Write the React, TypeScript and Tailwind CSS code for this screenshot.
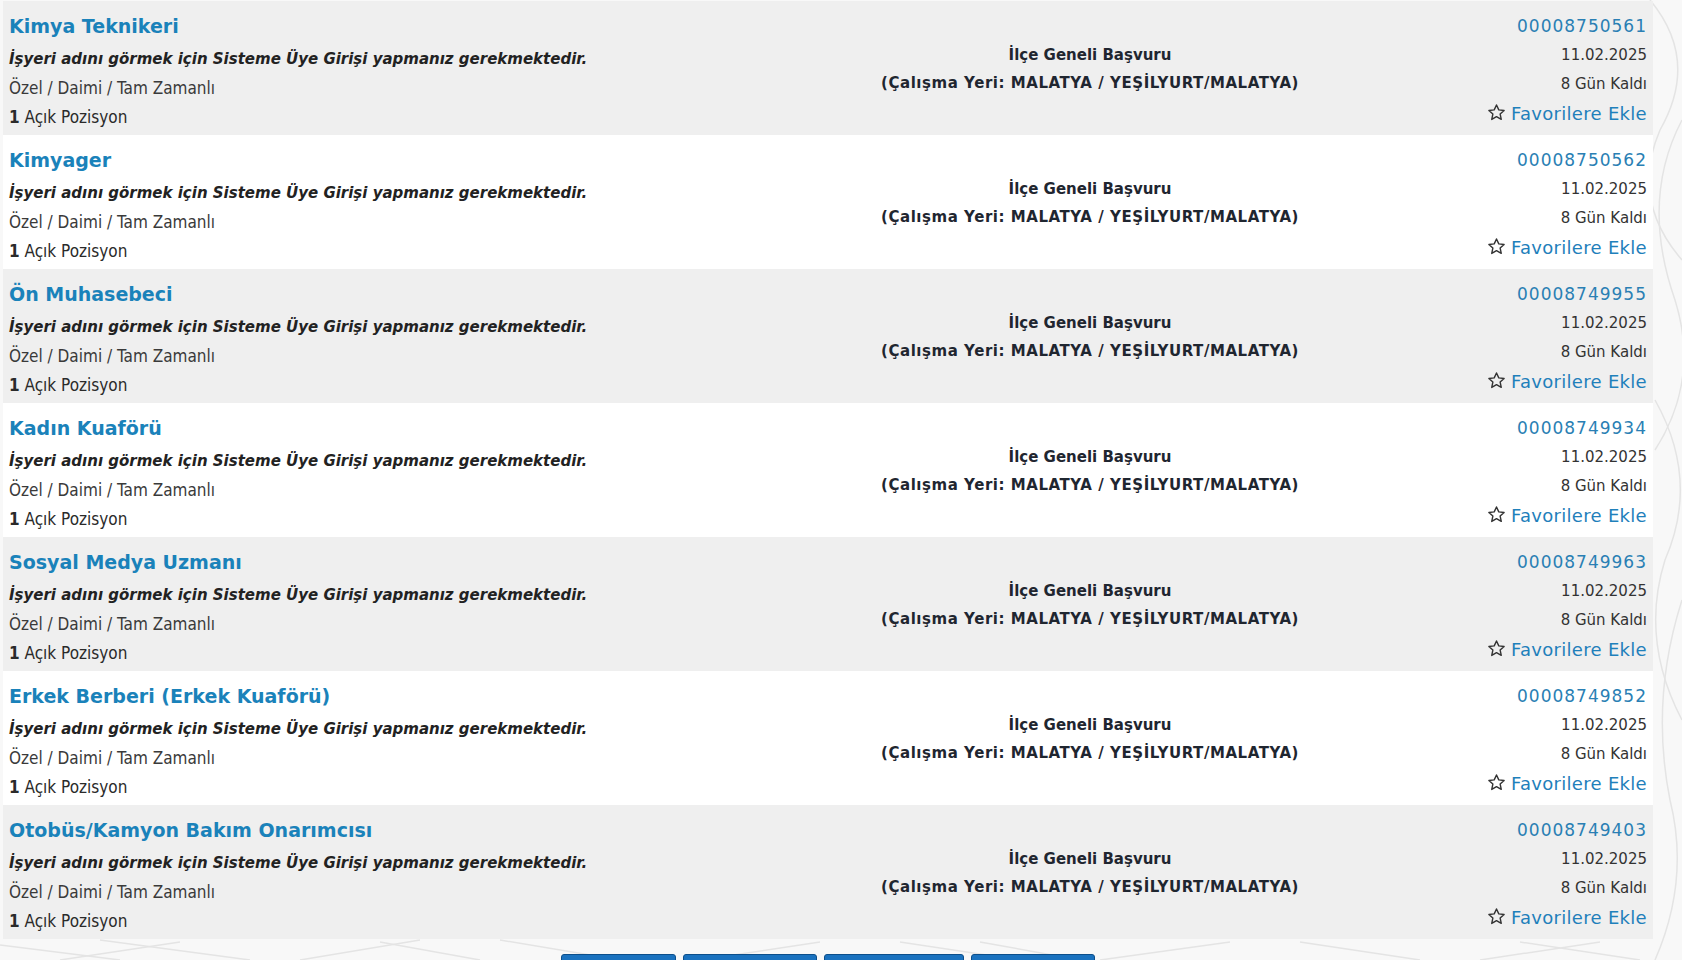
import React from "react";

type Job = { title: string; no: string };

const jobs: Job[] = [
  { title: "Kimya Teknikeri", no: "00008750561" },
  { title: "Kimyager", no: "00008750562" },
  { title: "Ön Muhasebeci", no: "00008749955" },
  { title: "Kadın Kuaförü", no: "00008749934" },
  { title: "Sosyal Medya Uzmanı", no: "00008749963" },
  { title: "Erkek Berberi (Erkek Kuaförü)", no: "00008749852" },
  { title: "Otobüs/Kamyon Bakım Onarımcısı", no: "00008749403" },
];

const StarIcon = () => (
  <svg width="19" height="19" viewBox="0 0 24 24" className="inline-block align-[-2px] mr-[5px]">
    <polygon
      points="12,2.5 14.9,8.7 21.6,9.4 16.6,14 18,20.7 12,17.3 6,20.7 7.4,14 2.4,9.4 9.1,8.7"
      fill="none"
      stroke="#333"
      strokeWidth="1.8"
      strokeLinejoin="round"
    />
  </svg>
);

const Pattern = () => (
  <svg className="absolute inset-0 w-full h-full" viewBox="0 0 1682 960" preserveAspectRatio="none">
    <g stroke="#e4e4e4" strokeWidth="1.5" fill="none">
      <path d="M1650 0 Q1700 60 1660 130 Q1630 200 1682 260" />
      <path d="M1682 120 Q1640 200 1675 300 Q1700 380 1655 450" />
      <path d="M1655 400 Q1700 480 1665 560 Q1640 640 1682 720" />
      <path d="M1682 600 Q1650 700 1670 800 Q1690 880 1655 960" />
      <path d="M0 945 L120 960 M100 940 L250 960 M300 960 L420 940 M500 940 L620 960 M700 960 L820 942 M900 942 L1020 960 M1100 960 L1230 942 M1300 942 L1420 960 M1480 960 L1600 942" />
      <path d="M60 960 L180 942 M380 942 L480 960 M980 942 L1080 960 M1520 942 L1640 960" />
    </g>
  </svg>
);

const tahoma = { fontFamily: "'DejaVu Sans Condensed', Tahoma, 'Liberation Sans', sans-serif" };

export default function App() {
  return (
    <div
      className="relative w-[1682px] h-[960px] overflow-hidden bg-[#f8f8f8]"
      style={{ fontFamily: "'DejaVu Sans', Verdana, sans-serif" }}
    >
      <Pattern />
      <div className="relative flex flex-col">
        <div className="pt-[1px] pl-[3px] w-[1653px]">
          {jobs.map((j, i) => (
            <div
              key={j.no}
              className={`grid grid-cols-[787px_600px_1fr] h-[134px] ${i % 2 === 0 ? "bg-[#efefef]" : "bg-white"}`}
            >
              <div className="pl-[6px] pt-[9px]">
                <div className="text-[19px] font-bold leading-[33px] text-[#1a82ba]">{j.title}</div>
                <div className="mt-[2px] text-[15px] font-bold italic leading-[29px] text-[#222]">
                  İşyeri adını görmek için Sisteme Üye Girişi yapmanız gerekmektedir.
                </div>
                <div className="text-[17px] leading-[29px] text-[#3a3a3a]" style={tahoma}>
                  Özel / Daimi / Tam Zamanlı
                </div>
                <div className="text-[17px] leading-[29px] text-[#2a2a2a]" style={tahoma}>
                  <b>1</b> Açık Pozisyon
                </div>
              </div>
              <div className="pt-[40px] text-center text-[15px] font-bold leading-[28px] text-[#1f2630]">
                <div>İlçe Geneli Başvuru</div>
                <div className="tracking-[0.55px]">(Çalışma Yeri: MALATYA / YEŞİLYURT/MALATYA)</div>
              </div>
              <div className="pr-[6px] pt-[11px] text-right text-[15px] leading-[29px]">
                <div className="text-[17px] text-[#2a7fb4] tracking-[1px]">{j.no}</div>
                <div className="text-[#333]">11.02.2025</div>
                <div className="text-[#333]">8 Gün Kaldı</div>
                <div className="text-[18px] text-[#1f80bb] tracking-[0.3px]">
                  <StarIcon />
                  Favorilere Ekle
                </div>
              </div>
            </div>
          ))}
        </div>
        <div className="mt-[15px] flex justify-center gap-[7px] pr-[27px]">
          <div className="w-[115px] h-[20px] rounded-t-[3px] bg-[#1a72bf] border border-[#0d4f8a]" />
          <div className="w-[134px] h-[20px] rounded-t-[3px] bg-[#1a72bf] border border-[#0d4f8a]" />
          <div className="w-[140px] h-[20px] rounded-t-[3px] bg-[#1a72bf] border border-[#0d4f8a]" />
          <div className="w-[124px] h-[20px] rounded-t-[3px] bg-[#1a72bf] border border-[#0d4f8a]" />
        </div>
      </div>
    </div>
  );
}
